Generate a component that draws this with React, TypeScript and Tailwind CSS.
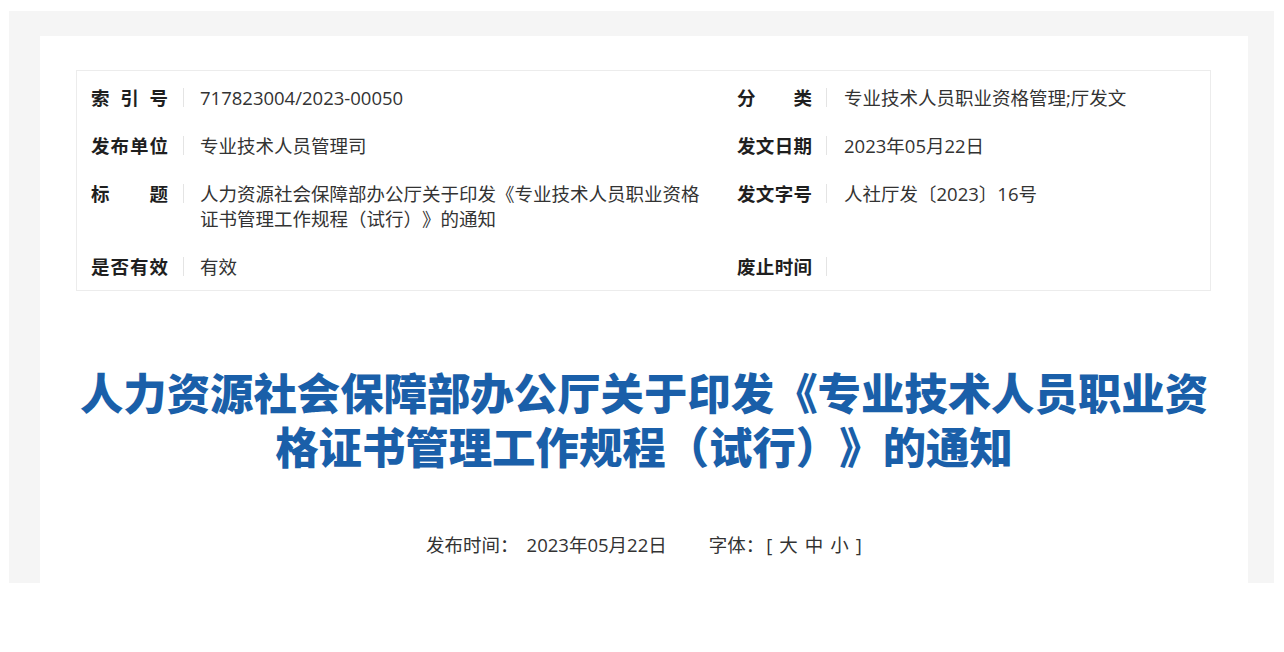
import React from "react";

const FONT = { fontFamily: '"Open Sans", "Noto Sans CJK SC", sans-serif' };

function Sep() {
  return <span className="mt-[3px] block h-[19px] w-px shrink-0 bg-[#e4e4e4]" />;
}

function LeftCell({ label, children }: { label: string; children?: React.ReactNode }) {
  return (
    <div className="flex items-start py-[11.5px] leading-[25px]">
      <span className="w-[77px] shrink-0 font-bold text-[#1f1f1f] [text-align:justify] [text-align-last:justify]">{label}</span>
      <span className="ml-[15px] flex"><Sep /></span>
      <span className="ml-[16px] flex-1 pr-[30px] text-[#333]">{children}</span>
    </div>
  );
}

function RightCell({ label, children }: { label: string; children?: React.ReactNode }) {
  return (
    <div className="flex items-start py-[11.5px] leading-[25px]">
      <span className="w-[75px] shrink-0 font-bold text-[#1f1f1f] [text-align:justify] [text-align-last:justify]">{label}</span>
      <span className="ml-[14px] flex"><Sep /></span>
      <span className="ml-[17px] flex-1 text-[#333]">{children}</span>
    </div>
  );
}

export default function App() {
  return (
    <div className="h-[652px] w-[1284px] bg-white pt-[11px] pl-[9px] [text-spacing-trim:space-all]" style={FONT}>
      <div className="h-[572px] w-[1265px] bg-[#f5f5f5] pl-[31px] pr-[26px] pt-[25px]">
        <div className="h-full bg-white px-[36px] pt-[34px]">
          <div className="w-[1135px] border border-[#ececec] pl-[14px] pt-[2px] text-[18.5px]">
            <div className="grid grid-cols-[646px_1fr]">
              <LeftCell label="索引号">717823004/2023-00050</LeftCell>
              <RightCell label="分类">专业技术人员职业资格管理;厅发文</RightCell>
              <LeftCell label="发布单位">专业技术人员管理司</LeftCell>
              <RightCell label="发文日期">2023年05月22日</RightCell>
              <LeftCell label="标题">人力资源社会保障部办公厅关于印发《专业技术人员职业资格证书管理工作规程（试行）》的通知</LeftCell>
              <RightCell label="发文字号">人社厅发〔2023〕16号</RightCell>
              <LeftCell label="是否有效">有效</LeftCell>
              <RightCell label="废止时间"></RightCell>
            </div>
          </div>
          <h1 className="mx-auto mt-[76px] w-[1135px] text-center text-[43.4px] font-black leading-[54px] text-[#1a5fa9]">
            人力资源社会保障部办公厅关于印发《专业技术人员职业资格证书管理工作规程（试行）》的通知
          </h1>
          <div className="mt-[57px] flex justify-center text-[18.5px] leading-[26px] text-[#333]">
            <span>发布时间：</span>
            <span className="ml-[8px]">2023年05月22日</span>
            <span className="ml-[42px]">字体：</span>
            <span className="ml-[2px] flex gap-[7px]">
              <span>[</span>
              <span>大</span>
              <span>中</span>
              <span>小</span>
              <span>]</span>
            </span>
          </div>
        </div>
      </div>
    </div>
  );
}
